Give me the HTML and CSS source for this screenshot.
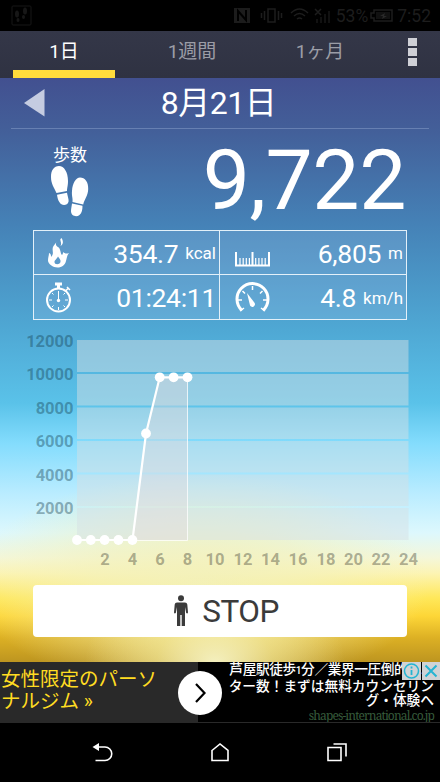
FILE: index.html
```html
<!DOCTYPE html>
<html lang="ja">
<head>
<meta charset="utf-8">
<title>歩数計</title>
<link rel="stylesheet" href="styles.css">
</head>
<body>
<div class="phone">
  <header class="status">
    <svg class="status-app" width="22" height="22" viewBox="0 0 22 22"><rect x="1" y="1" width="19" height="19" rx="1" fill="none" stroke="currentColor"/><g fill="currentColor"><ellipse cx="6" cy="9" rx="2" ry="3.5"/><ellipse cx="7" cy="15" rx="1.5" ry="2"/><ellipse cx="14" cy="6" rx="2" ry="3.5"/><ellipse cx="12.500" cy="12" rx="1.500" ry="2"/></g></svg>
    <svg class="status-icons" width="98" height="20" viewBox="0 0 98 20">
      <path d="M1 2h16v15H1z" fill="#1c1c1c"/><path d="M5 15V5l8 9V4" fill="none" stroke="#000" stroke-width="2"/>
      <g fill="none" stroke="currentColor" stroke-width="1.500"><rect x="35" y="3" width="7" height="13"/><path d="M31.500 5v9M28.500 7v5M45.500 5v9M48.500 7v5M58 7q8.500-8 17 0M61 10q5.500-5 11 0M64 13q2.500-2 5 0M82 3l6 6M88 3l-6 6"/></g>
      <path d="M83 13h2v4h-2zM87 11h2v6h-2zM91 8h2v9h-2zM95 5h2v12h-2z" fill="#111"/>
    </svg>
    <span class="status-pct">53%</span>
    <svg class="status-bat" width="24" height="16" viewBox="0 0 24 16"><path d="M1 5h3V2h18v11H4v-3H1z" fill="none" stroke="currentColor" stroke-width="1.500"/><path d="M6 4h14v7H6z" fill="#111"/><path d="M10 8l5-3-1 3h3l-5 3 1-3z" fill="#2a2a2a"/></svg>
    <span class="status-time">7:52</span>
  </header>
  <nav class="tabs">
    <div class="tab tab-active">1日</div>
    <div class="tab">1週間</div>
    <div class="tab">1ヶ月</div>
    <div class="more"><i></i><i></i><i></i></div>
  </nav>
  <main class="main">
    <div class="date">
      <svg class="prev" width="21" height="28" viewBox="0 0 21 28"><path d="M0 14L20.500 0v27.500z" fill="#c5cce1"/></svg>
      <h1>8月21日</h1>
    </div>
    <section class="steps">
      <div class="steps-label">
        <span>歩数</span>
        <svg width="38" height="52" viewBox="0 0 38 52" fill="#fff">
          <path d="M0 11C0 4 3 0 8 0c5 0 9 6 9 15 0 5-1 7-1 10L5.500 27C3 21 0 18 0 11z"/>
          <path d="M6 28.800l10-2c1 5 2 7 1.500 9-1 4-7 4.500-9 .500-1.500-2-2-4-2.500-7.500z"/>
          <path d="M29 11.500c5 0 8.500 4.500 8.200 11.500-.2 7-3.700 10-5 15.500L21.500 36c.5-4-1-6-.5-11 .5-8 4-13.500 8-13.500z"/>
          <path d="M21 37.500l10.500 2.300c0 4-.5 7-3 9.200-3 2.500-8.500 1-8.500-3.700 0-2 .5-4 1-7.800z"/>
        </svg>
      </div>
      <div class="count">9,722</div>
    </section>
    <section class="stats">
      <div class="stat">
        <svg width="28" height="32" viewBox="0 0 28 32"><path d="M12 4c-2 3-1 5 1 6 3 2 2 6 4 8 1-1 1-2 1-3 2 1.500 3 2 6 1-2 2-2 5-3 8-1 4-4 6.500-8.500 6.500S3 27 3 23.500c0-3 1-5 1-7.500 2 1 2 2 2 4C10 16 6 13 8.500 9c1-1.500 2-2.500 3.500-5zM16.500 1c-3 2 1 4-1 8 3-2 3-5 1-8z" fill="#fff"/><path d="M13 19.500c1 2 3 3 2.500 5.500-1 3-6 3-6 0 0-2 2-2.500 3.500-5.500z" fill="#5c9aca"/></svg>
        <b>354.7</b><small>kcal</small>
      </div>
      <div class="stat">
        <svg class="ruler" width="36" height="32" viewBox="0 0 36 32"><path d="M1 15v13.500h33V15M17.500 15v13" fill="none" stroke="#fff" stroke-width="2"/><path d="M5 21v7M8.200 21v7M11.300 21v7M14.400 21v7M20.700 21v7M23.900 21v7M27 21v7M30.200 21v7" stroke="#fff" stroke-width="1.200"/></svg>
        <b>6,805</b><small>m</small>
      </div>
      <div class="stat">
        <svg width="28" height="32" viewBox="0 0 28 32" fill="none" stroke="#fff"><circle cx="13.500" cy="18" r="11.500" stroke-width="2"/><path d="M10 2h7M13.500 2v5" stroke-width="3"/><path d="M22 5l3 3M20.500 9l3-3" stroke-width="1.500"/><path d="M13.500 9v9M13.500 25v3M4 18h3M20 18h3M7 11l1.500 1.500M20 11l-1.500 1.500M7 25l1.500-1.500M20 25l-1.500-1.500" stroke-width="1"/><circle cx="13.500" cy="18.500" r="1.700" fill="#fff" stroke="none"/></svg>
        <b>01:24:11</b>
      </div>
      <div class="stat">
        <svg class="ruler" width="36" height="32" viewBox="0 0 36 32"><path d="M7 28.500A15.500 15.500 0 1 1 28 28.500" fill="none" stroke="#fff" stroke-width="3"/><path d="M17.500 4v4M7.500 9l2.500 2.500M27.500 9L25 11.500M3 18h4M28 18h4M5 29l4-3M30 29l-4-3" stroke="#fff" stroke-width="1.500"/><path d="M12 11l7.300 9.500a2.600 2.600 0 1 1-4.500 2z" fill="#fff"/></svg>
        <b>4.8</b><small>km/h</small>
      </div>
    </section>
    <svg class="chart" width="440" height="250" viewBox="0 325 440 250">
      <g fill="#d5e0e4" fill-opacity=".48">
        <path d="M77 340h331.500v32H77zM77 374h331.500v31.500H77zM77 407.500h331.500V439H77zM77 441h331.500v31.500H77zM77 474.500h331.500V506H77zM77 508h331.500v32H77z"/>
        <path class="area" d="M77 540h55.500L146 433.500 159.700 377.300h28V540z"/>
      </g>
      <path d="M132 540.500h55.500V377" fill="none" stroke="#fff" stroke-opacity=".75"/>
      <path d="M77 540h55.500L146 433.500 159.700 377.300h28" fill="none" stroke="#fff" stroke-width="2.200"/>
      <g fill="#fff"><circle cx="77" cy="540" r="4.900"/><circle cx="90.800" cy="540" r="4.900"/><circle cx="104.600" cy="540" r="4.900"/><circle cx="118.400" cy="540" r="4.900"/><circle cx="132.400" cy="540" r="4.900"/><circle cx="146" cy="433.500" r="4.900"/><circle cx="159.700" cy="377.300" r="4.900"/><circle cx="173.600" cy="377.300" r="4.900"/><circle cx="187.500" cy="377.300" r="4.900"/></g>
      <g class="axis axis-y"><text x="73.500" y="347">12000</text><text x="73.500" y="380">10000</text><text x="73.500" y="413.500">8000</text><text x="73.500" y="447">6000</text><text x="73.500" y="480.500">4000</text><text x="73.500" y="514">2000</text></g>
      <g class="axis axis-x"><text x="105" y="564.500">2</text><text x="132.500" y="564.500">4</text><text x="160" y="564.500">6</text><text x="187.500" y="564.500">8</text><text x="215" y="564.500">10</text><text x="243" y="564.500">12</text><text x="270.500" y="564.500">14</text><text x="298" y="564.500">16</text><text x="326" y="564.500">18</text><text x="353.500" y="564.500">20</text><text x="381" y="564.500">22</text><text x="408.500" y="564.500">24</text></g>
    </svg>
    <button class="stop">
      <svg width="14" height="32" viewBox="0 0 14 32" fill="#3b3b3b"><circle cx="7" cy="3.200" r="3"/><path d="M3 7.500h8q2 0 2.300 2l.7 8q-.5 1.500-1.800.5L11 12v19H7.700V20H6.300v11H3V12l-1.200 6Q.500 19 0 17.500l.7-8q.3-2 2.300-2z"/></svg>
      <span>STOP</span>
    </button>
  </main>
  <aside class="ad">
    <div class="ad-title">女性限定のパーソ<br>ナルジム <span>»</span></div>
    <div class="ad-body">
      <p><span class="first">芦屋駅徒歩<span class="one">1</span>分／業界一圧倒的モニ</span><br>ター数！まずは無料カウンセリン<br>グ・体験へ</p>
      <div class="ad-url">shapes-international.co.jp</div>
    </div>
    <div class="ad-go"><svg width="44" height="44" viewBox="0 0 44 44"><path d="M18 13l8.500 9-8.500 9" fill="none" stroke="#000" stroke-width="2.200"/></svg></div>
    <div class="ad-marks">
      <svg width="19" height="18" viewBox="0 0 19 18"><circle cx="9.500" cy="9" r="7" fill="none" stroke="#25b4d2" stroke-width="1.500"/><path d="M9.500 8v5M9.500 4.500v2" stroke="#25b4d2" stroke-width="1.800"/></svg>
      <svg width="18" height="18" viewBox="0 0 18 18"><path d="M3.500 3.500l11 11M14.500 3.500l-11 11" stroke="#25b4d2" stroke-width="2"/></svg>
    </div>
  </aside>
  <footer class="nav">
    <svg width="22" height="22" viewBox="0 0 22 22"><path d="M4 5h9a6.700 6.700 0 0 1 0 13.500H3.500" fill="none" stroke="#fff" stroke-width="1.600"/><path d="M.500 5L7 1v8z" fill="#fff"/></svg>
    <svg width="22" height="22" viewBox="0 0 22 22"><path d="M3 8.500L11 2l8 6.500v10H3z" fill="none" stroke="#fff" stroke-width="1.600"/></svg>
    <svg width="22" height="22" viewBox="0 0 22 22"><path d="M2 5.500h13v13H2zM7.500 2H20v12.500" fill="none" stroke="#fff" stroke-width="1.600"/></svg>
  </footer>
</div>
</body>
</html>
```
FILE: styles.css
```css
* { box-sizing: border-box; }
body { margin: 0; background: #000; font-family: Roboto, "Noto Sans CJK JP", sans-serif; color: #fff; }
svg { display: block; flex: none; }
.phone { width: 440px; height: 782px; display: flex; flex-direction: column; overflow: hidden; }
.status { height: 31px; display: flex; align-items: center; padding: 1px 9px 0 11px; color: #1d1d1d; font-size: 17.5px; line-height: 31px; }
.status-app { margin-right: auto; color: #171717; }
.status-icons { margin-right: 5px; }
.status-bat { margin: 0 3px 0 2px; }
.tabs { height: 47px; display: flex; padding-left: 13px; background: linear-gradient(#343748, #2f3242); font-size: 19px; color: #9b9da6; }
.tab { flex: none; width: 102px; margin-right: 26px; height: 47px; line-height: 41px; text-align: center; border-bottom: 8px solid transparent; white-space: nowrap; }
.tab-active { color: #fff; border-color: #ffdc3c; }
.more { width: 9px; margin: 7px 0 0 11px; display: flex; flex-direction: column; gap: 2px; }
.more i { width: 9px; height: 8px; background: #cfd0d6; }
.main {
  height: 584px; flex: none; display: flex; flex-direction: column; align-items: center;
  background:
    radial-gradient(ellipse 130px 90px at 215px 584px, rgba(246,243,196,.95), rgba(246,238,160,.5) 45%, rgba(246,238,160,0)),
    radial-gradient(ellipse 230px 110px at 200px 505px, rgba(243,241,187,.95), rgba(243,241,187,.65) 45%, rgba(243,241,187,0)),
    linear-gradient(#425090 0, #435f99 52px, #4582b7 147px, #4fa8d4 252px, #5ac2e9 325px, #83dcfd 365px, #b9ecff 415px, #ddf8fd 455px, #f4f7da 480px, #fcf4b4 495px, #ffe85a 520px, #fdd637 538px, #dcb024 560px, #bd9520 584px);
}
.date { width: 418px; height: 51px; display: flex; align-items: center; border-bottom: 1px solid #6780b2; }
.prev { margin-left: 13px; }
.date h1 { margin: 0; width: 347px; font-size: 32px; font-weight: 400; line-height: 49px; text-align: center; letter-spacing: -.5px; }
.steps { width: 374px; height: 101px; display: flex; justify-content: space-between; }
.steps-label { width: 74px; display: flex; flex-direction: column; align-items: center; padding-top: 16px; font-size: 17px; line-height: 21px; }
.count { padding: 1px 1px 0 0; font-size: 84px; line-height: 101px; letter-spacing: -.4px; white-space: nowrap; }
.stats { width: 374px; height: 90px; display: grid; grid-template-columns: 185px 1fr; grid-template-rows: 43px 1fr; gap: 1px; border: 1.500px solid #e3f0f9; background: linear-gradient(#e3f0f9, #e3f0f9) 185px 0 / 1px 100% no-repeat, linear-gradient(#e3f0f9, #e3f0f9) 0 43px / 100% 1px no-repeat, rgba(170,200,235,.22); }
.stat { display: flex; align-items: center; padding: 1px 3px 0 11px; white-space: nowrap; min-width: 0; }
.stat b { margin-left: auto; font-size: 26.500px; font-weight: 400; letter-spacing: -.3px; }
.stat small { margin-left: 7px; font-size: 17px; }
.ruler { margin-left: 4px; }
.chart { margin-top: 5px; font: 500 16px Roboto, sans-serif; }
.area { fill: #e6d9dc; fill-opacity: .38; }
.axis { fill: #123a4a; fill-opacity: .4; font-weight: 700; font-size: 16.500px; }
.axis-y { text-anchor: end; }
.axis-x { text-anchor: middle; fill: #28281e; fill-opacity: .37; }
.stop { margin: 10px 0 0; padding: 0 0 0 13px; width: 374px; height: 52px; border: 0; border-radius: 4px; background: #fff; color: #3b3b3b; display: flex; align-items: center; justify-content: center; gap: 14px; font: 31.500px Roboto, sans-serif; letter-spacing: -.5px; }
.ad { position: relative; height: 61px; flex: none; display: flex; border-bottom: 1px solid #292929; overflow: hidden; }
.ad-title { width: 198px; padding: 7px 0 0 1px; background: #292929; color: #ffdc22; font-size: 19.500px; line-height: 22px; white-space: nowrap; }
.ad-body { flex: 1; padding: 0 6px 0 0; text-align: right; font-size: 13.700px; line-height: 14.500px; white-space: nowrap; }
.ad-body p { margin: 0; font-weight: 500; }
.first { letter-spacing: -.4px; }
.one { font-size: 10px; }
.ad-url { color: #365b3b; font: 12px/16px "Noto Serif", "DejaVu Serif Condensed", "DejaVu Serif", serif; letter-spacing: -.88px; }
.ad-go { position: absolute; left: 178px; top: 9px; width: 44px; height: 44px; border-radius: 50%; background: #fff; }
.ad-marks { position: absolute; right: 0; top: 0; display: flex; gap: 1px; }
.ad-marks svg { background: #d0d3d5; }
.nav { height: 59px; display: flex; justify-content: space-between; align-items: center; padding: 0 92px; }
```
